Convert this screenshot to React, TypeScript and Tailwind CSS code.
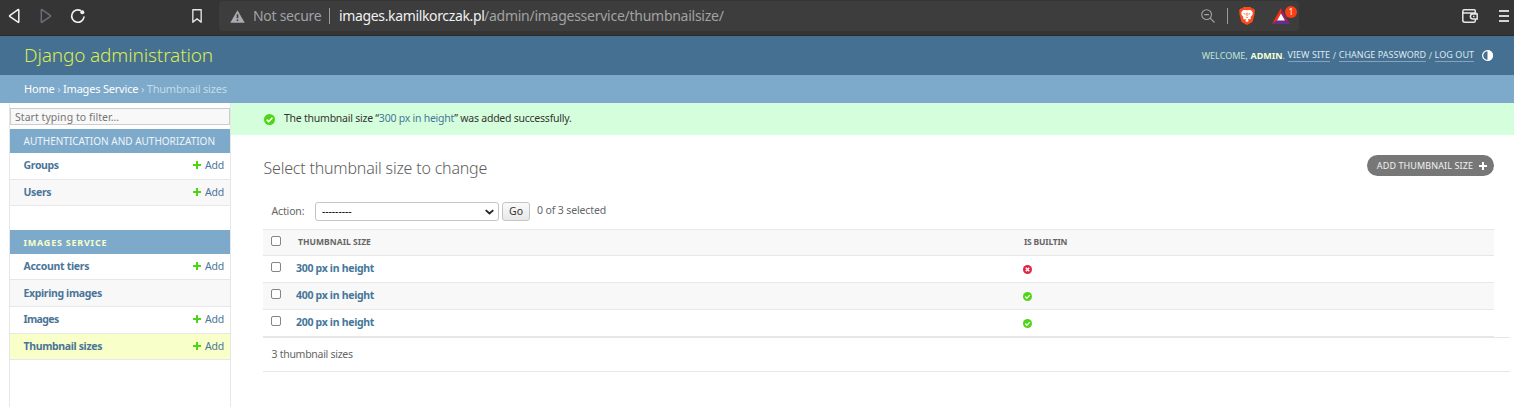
import React from "react";

const apps = [
  {
    name: "AUTHENTICATION AND AUTHORIZATION",
    current: false,
    models: [
      { name: "Groups", add: true, box: "h-[27px] pb-0.5", track: "tracking-[-0.35px]" },
      { name: "Users", add: true, box: "h-[26px] bg-[#f8f8f8]", track: "tracking-[-0.35px]" },
    ],
  },
  {
    name: "IMAGES SERVICE",
    current: true,
    models: [
      { name: "Account tiers", add: true, box: "h-[26px]", track: "tracking-[-0.3px]" },
      { name: "Expiring images", add: false, box: "h-[27px] bg-[#f8f8f8]", track: "tracking-[-0.35px]" },
      { name: "Images", add: true, box: "h-[27px] pb-0.5", track: "tracking-[-0.6px]" },
      { name: "Thumbnail sizes", add: true, box: "h-[26px] bg-[#f8ffc9]", track: "tracking-[-0.35px]" },
    ],
  },
];

const sizes = [
  { name: "300 px in height", builtin: false, bg: "" },
  { name: "400 px in height", builtin: true, bg: "bg-[#f8f8f8]" },
  { name: "200 px in height", builtin: true, bg: "" },
];

function Yes({ className }: { className: string }) {
  return (
    <svg viewBox="0 0 12 12" className={className}>
      <circle cx="6" cy="6" r="6" fill="#4cd615" />
      <path d="M2.9 6.1 5.1 8.3 9.2 4.1" fill="none" stroke="#fff" strokeWidth="1.7" />
    </svg>
  );
}

function No({ className }: { className: string }) {
  return (
    <svg viewBox="0 0 12 12" className={className}>
      <circle cx="6" cy="6" r="6" fill="#dd2640" />
      <path d="M3.7 3.7 8.3 8.3M8.3 3.7 3.7 8.3" fill="none" stroke="#fff" strokeWidth="2" />
    </svg>
  );
}

function Plus({ className }: { className: string }) {
  return (
    <svg viewBox="0 0 8 8" className={className} shapeRendering="crispEdges">
      <path d="M3 0h2v3h3v2H5v3H3V5H0V3h3z" fill="currentColor" />
    </svg>
  );
}

function Check() {
  return (
    <input
      type="checkbox"
      className="block size-[10px] shrink-0 appearance-none rounded-[2px] border border-[#858585] bg-white"
    />
  );
}

function BrowserBar() {
  return (
    <div className="flex h-9 shrink-0 items-start border-b border-[#2a2a2a] bg-[#353535] text-[14px] leading-[30px] text-[#e4e4e4]">
      <svg viewBox="0 0 90 32" className="h-8 w-[90px]" fill="none" strokeWidth="1.5" strokeLinejoin="round" strokeLinecap="round">
        <path d="M18.8 10v11.8q0 .9-.8.4L10 16.7q-.9-.7 0-1.4l8-5.6q.8-.5.8.3z" stroke="#f2f2f2" />
        <path d="M41.3 10v11.8q0 .9.8.4l8-5.5q.9-.7 0-1.4l-8-5.6q-.8-.5-.8.3z" stroke="#6d6c78" />
        <path d="M84 17a6.2 6.2 0 1 1-3.4-6.5" stroke="#f2f2f2" strokeWidth="1.6" />
        <circle cx="82.3" cy="12.3" r="2" fill="#f2f2f2" />
      </svg>
      <svg viewBox="0 0 12 16" className="ml-[102px] mt-2 h-4 w-[10px]" fill="none" preserveAspectRatio="none">
        <path d="M1 1.8h10v12.4L6 10.8 1 14.2z" stroke="#e6e6e6" strokeWidth="1.6" strokeLinejoin="round" />
      </svg>
      <div className="ml-[17px] mt-px flex h-[30px] w-[1080px] items-center rounded-[4px] bg-[#3d3d3d] pl-[11px]">
        <svg viewBox="0 0 16 14" className="h-[13px] w-[15px]">
          <path d="M8 .3 15.8 13.7H.2z" fill="#a9abb0" />
          <path d="M7.1 4.6h1.8v4.2H7.1zM7.1 10.1h1.8v1.8H7.1z" fill="#3d3d3d" />
        </svg>
        <span className="ml-2 w-[76px] whitespace-nowrap tracking-[-0.28px] text-[#a0a2a8]">Not secure</span>
        <span className="h-4 w-px bg-[#9c9c9c]" />
        <span className="ml-[9px] w-[145px] whitespace-nowrap tracking-[-0.35px] text-[#f0f0f0]">images.kamilkorczak.pl</span>
        <span className="grow whitespace-nowrap tracking-[-0.26px] text-[#a2a2a2]">/admin/imagesservice/thumbnailsize/</span>
        <svg viewBox="0 0 14 14" className="size-[14px]" fill="none" stroke="#a4a4a4" strokeWidth="1.1">
          <circle cx="5.6" cy="5.6" r="4.9" />
          <path d="M9.1 9.1 13.5 13.5M3.2 5.6h4.8" />
        </svg>
        <span className="ml-[12px] h-4 w-px bg-[#9c9c9c]" />
        <svg viewBox="0 0 16 18" className="ml-[11px] h-[18px] w-4">
          <path d="M4.5 0h7L13 1.6l1.6-.2L16 3.6l-.5 1.6.2 1.5-1.9 7.3q-.3 1-1.2 1.6L8 18l-4.600-2.400q-.9-.6-1.200-1.600L.3 6.700.5 5.200 0 3.600l1.400-2.200 1.600.2z" fill="#fb4a1b" />
          <path d="M8 3.300 10 2.900l1.800.2 2.100 2.400-.3 1-.1 1.200-1.900 2.400.3 1.500-.8 1-1.300-.5-1 .8 1.100 1L8 15l-1.900-1.100 1.100-1-1-.8-1.300.5-.8-1 .3-1.500-1.900-2.400-.1-1.200-.3-1 2.100-2.400L6 2.900z" fill="#fff" />
          <path d="m4.100 6.300 2.600.5-.4 1zM11.900 6.300l-2.600.5.4 1zM7.500 5.700h1L8.400 9h-.8zM6.300 9.500 8 10.300l1.700-.8L8 11.300z" fill="#fb4a1b" />
        </svg>
        <div className="relative ml-[17px] mr-[9px] h-[16px] w-[18px]">
          <svg viewBox="0 0 18 16" className="h-4 w-[18px]">
            <path d="M9 0v5.400L4.900 12.400 0 16z" fill="#ff2d0c" />
            <path d="M9 0l9 16-4.900-3.600L9 5.400z" fill="#9e1f63" />
            <path d="M0 16h18l-4.900-3.600H4.900z" fill="#662d91" />
            <path d="M9 5.600 13 12.400H5z" fill="#fff" />
          </svg>
          <span className="absolute left-[13px] top-[-2px] flex size-[12px] items-center justify-center rounded-full bg-[#fc3f12] text-[8px] leading-none text-white">1</span>
        </div>
      </div>
      <svg viewBox="0 0 16 14" className="ml-[163px] mt-[9px] h-[14px] w-4" fill="none" stroke="#e6e6e6" strokeWidth="1.5">
        <path d="M13.3 4V2q0-1.200-1.200-1.200H2.300Q.8.800.8 2.300v9q0 1.900 1.900 1.900h9q1.600 0 1.600-1.500V10M1 3.200q.4.900 1.500.9h10.500q1.200 0 1.500.9M15.200 5v5h-4.300q-2.500 0-2.500-2.500t2.500-2.500z" />
        <path d="M11 7.500h1.500" />
      </svg>
      <svg viewBox="0 0 10 12" className="ml-[21px] mt-[10px] h-[12px] w-[10px]" fill="#d4d4d4" shapeRendering="crispEdges">
        <path d="M0 0h10v2H0zM0 5h10v2H0zM0 10h10v2H0z" />
      </svg>
    </div>
  );
}

function Header() {
  const link = "border-b border-[#86a3b9] leading-[12px] text-[#dfe8ee]";
  return (
    <header className="flex h-[39px] shrink-0 items-center bg-[#457092] pl-6 pr-[21px]">
      <h1 className="-mt-px grow text-[19px] font-light leading-[38px] tracking-[-0.13px] text-[#dcec4e]">Django administration</h1>
      <div className="flex items-center whitespace-pre text-[9px] leading-[12px] tracking-[0.01px] text-[#c8e3cb] [word-spacing:0.25px]">
        <span>WELCOME, </span>
        <b className="text-[#f5ffcf]">ADMIN</b>
        <span>. </span>
        <a className={link}>VIEW SITE</a>
        <span> / </span>
        <a className={link}>CHANGE PASSWORD</a>
        <span> / </span>
        <a className={link}>LOG OUT</a>
      </div>
      <svg viewBox="0 0 12 12" className="ml-2 size-[11px]">
        <circle cx="6" cy="6" r="5.3" fill="none" stroke="#fff" strokeWidth="1.3" />
        <path d="M6 0a6 6 0 0 1 0 12z" fill="#fff" />
      </svg>
    </header>
  );
}

function Sidebar() {
  return (
    <nav className="ml-[9px] w-[222px] shrink-0 border-x border-[#e7e7e7] pt-[5px]">
      <input
        placeholder="Start typing to filter…"
        className="block h-[17px] w-full border border-[#ccc] bg-[#f8f8f8] px-1 text-[10.5px] tracking-[0.05px] placeholder:text-[#757575]"
      />
      <div className="mt-1 flex flex-col gap-6">
        {apps.map((app) => (
          <section key={app.name}>
            <h2
              className={
                app.current
                  ? "h-6 bg-[#7da9ca] pl-[13.5px] text-[9px] font-bold leading-[25px] tracking-[0.77px] text-[#f7ffcc]"
                  : "h-6 bg-[#7da9ca] pl-[13.5px] text-[10px] leading-[24px] text-[#eef5fa]"
              }
            >
              {app.name}
            </h2>
            {app.models.map((m) => (
              <div key={m.name} className={`flex items-center border-b border-[#e7e7e7] pl-[13.5px] pr-[6px] text-[10.5px] leading-[24px] text-[#4b7598] ${m.box}`}>
                <b className={`-mt-px grow ${m.track}`}>{m.name}</b>
                {m.add && (
                  <>
                    <Plus className="-mt-px size-2 text-[#4bd614]" />
                    <span className="-mt-px ml-1 tracking-[-0.2px]">Add</span>
                  </>
                )}
              </div>
            ))}
          </section>
        ))}
      </div>
    </nav>
  );
}

function Results() {
  return (
    <div className="mr-5 border-t border-[#e7e7e7]">
      <div className="flex h-[26px] items-center border-b border-[#e7e7e7] bg-[#f8f8f8] pl-2 text-[8.5px] font-bold text-[#666]">
        <div className="-mt-1"><Check /></div>
        <span className="ml-[17px] w-[726px] tracking-[0.05px]">THUMBNAIL SIZE</span>
        <span className="tracking-[-0.2px]">IS BUILTIN</span>
      </div>
      {sizes.map((s) => (
        <div key={s.name} className={`flex h-[27px] items-center border-b border-[#e7e7e7] pl-2 text-[10.5px] ${s.bg}`}>
          <div className="-mt-1"><Check /></div>
          <b className="-mt-0.5 ml-[15px] w-[727px] leading-[24px] tracking-[-0.3px] text-[#457699]">{s.name}</b>
          {s.builtin ? <Yes className="size-[9px]" /> : <No className="size-[9px]" />}
        </div>
      ))}
    </div>
  );
}

function Content() {
  return (
    <main className="flex min-w-0 grow flex-col text-[10.5px] text-[#666]">
      <div className="flex h-8 items-center whitespace-pre bg-[#d5ffdc] pl-[33px] tracking-[-0.24px] text-[#333]">
        <Yes className="mr-[9px] size-[11px]" />
        <span>The thumbnail size “<a className="text-[#457699]">300 px in height</a>” was added successfully.</span>
      </div>
      <div className="pl-8">
        <div className="mt-5 flex items-start justify-between pr-5">
          <h1 className="pl-[0.5px] text-[16px] font-light leading-[26px] tracking-[-0.2px] text-[#5e5e5e]">Select thumbnail size to change</h1>
          <a className="flex h-[21px] items-center rounded-full bg-[#777] pl-[10px] pr-[7px] text-[9px] tracking-[0.1px] text-[#f2f2f2]">
            ADD THUMBNAIL SIZE
            <Plus className="ml-[6px] size-2 text-white" />
          </a>
        </div>
        <div className="mt-[21px] flex h-[19px] items-center pl-2">
          <span className="w-[44px] whitespace-nowrap pl-[0.5px] tracking-[-0.15px]">Action:</span>
          <div className="flex h-[19px] w-[184px] items-center justify-between rounded-[3px] border border-[#c4c4c4] bg-white pl-[6px] pr-1 text-black">
            <span className="tracking-[-0.1px]">---------</span>
            <svg viewBox="0 0 10 6" className="h-[6px] w-[9px]" fill="none" stroke="#222" strokeWidth="2">
              <path d="M.8.9 5 4.7 9.2.9" />
            </svg>
          </div>
          <button className="ml-[3px] h-[19px] w-7 rounded-[3px] border border-[#c4c4c4] bg-gradient-to-b from-[#fafafa] to-[#e8e8e8] text-[#333]">Go</button>
          <span className="-mt-0.5 ml-[7px] tracking-[-0.13px]">0 of 3 selected</span>
        </div>
        <div className="h-2" />
        <Results />
        <div className="mr-1 flex h-[35px] items-center border-y border-[#e7e7e7] pl-[8.5px] tracking-[-0.28px]">3 thumbnail sizes</div>
      </div>
    </main>
  );
}

export default function App() {
  return (
    <div className="flex h-[407px] w-[1514px] flex-col overflow-hidden bg-white font-['Noto_Sans',sans-serif]">
      <BrowserBar />
      <Header />
      <div className="flex h-7 shrink-0 items-center whitespace-pre bg-[#7da9ca] pl-6 text-[11px] tracking-[-0.2px] text-[#c4dce8]">
        <a className="text-white">Home</a> › <a className="text-white">Images Service</a> › Thumbnail sizes
      </div>
      <div className="flex min-h-0 grow">
        <Sidebar />
        <Content />
      </div>
    </div>
  );
}
